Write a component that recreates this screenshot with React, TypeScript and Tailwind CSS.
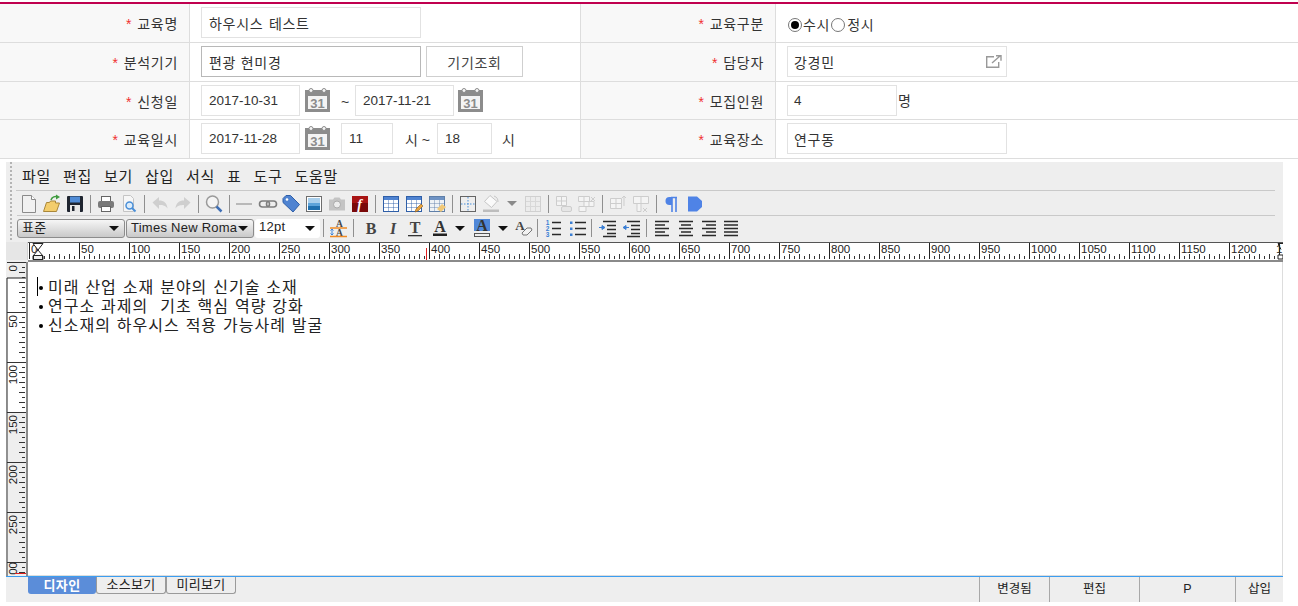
import type { ReactNode } from 'react';

const KR = "font-['Liberation_Sans','Noto_Sans_CJK_KR',sans-serif]";

function Label({ children }: { children: ReactNode }) {
  return (
    <div className="h-full flex items-center justify-end pt-[3px] pr-[11px] bg-[#f8f8f8] border-r border-[#dddddd] text-[14px] tracking-[0.7px] text-[#333]">
      <span className="text-[#f03030] mr-[5px]">*</span>
      {children}
    </div>
  );
}

function Field({ className, children }: { className: string; children?: ReactNode }) {
  return (
    <div className={`h-[31px] shrink-0 flex items-center pt-[3px] pl-[7px] border border-[#e2e2e2] bg-white text-[14px] tracking-[0.7px] text-[#333] ${className}`}>
      {children}
    </div>
  );
}

function Num({ children }: { children: string }) {
  return <span className="text-[13.5px] tracking-normal -mt-[1px]">{children}</span>;
}

function Calendar({ className }: { className: string }) {
  return (
    <svg width="25" height="25" viewBox="0 0 25 25" className={`shrink-0 -mt-[2px] ${className}`}>
      <rect x="0" y="3" width="25" height="22" fill="#8c8c8c" />
      <rect x="3" y="9" width="19" height="13" fill="#f4f4f4" />
      <circle cx="6" cy="3.5" r="2" fill="#f4f4f4" stroke="#8c8c8c" />
      <circle cx="19" cy="3.5" r="2" fill="#f4f4f4" stroke="#8c8c8c" />
      <text x="12.5" y="20.5" textAnchor="middle" fontSize="13" fontWeight="700" fontFamily="Liberation Sans" fill="#8c8c8c">31</text>
    </svg>
  );
}

function Radio({ checked }: { checked?: boolean }) {
  return (
    <span className="w-[14px] h-[14px] shrink-0 rounded-full border border-[#777] bg-white flex items-center justify-center">
      {checked && <span className="w-[8px] h-[8px] rounded-full bg-black" />}
    </span>
  );
}

function FormTable() {
  return (
    <div className={`mt-[2px] border-t-2 border-[#c0004f] ${KR}`}>
      <div className="grid grid-cols-[190px_391px_195px_1fr] grid-rows-[38px] h-[39px] border-b border-[#dddddd] items-center">
        <Label>교육명</Label>
        <div className="h-full flex items-center pb-[1px] pl-[11px] border-r border-[#dddddd]">
          <Field className="w-[220px]"><span className="[word-spacing:1px]">하우시스 테스트</span></Field>
        </div>
        <Label>교육구분</Label>
        <div className="h-full flex items-center pt-[3px] pl-[12px] text-[14px] tracking-[0.7px] text-[#333]">
          <Radio checked /><span className="ml-[1px] mt-[2px]">수시</span>
          <span className="ml-[1px]"><Radio /></span><span className="ml-[2px] mt-[2px]">정시</span>
        </div>
      </div>
      <div className="grid grid-cols-[190px_391px_195px_1fr] grid-rows-[38px] h-[39px] border-b border-[#dddddd] items-center">
        <Label>분석기기</Label>
        <div className="h-full flex items-center pb-[1px] pl-[11px] border-r border-[#dddddd]">
          <Field className="w-[220px] !border-[#b8b8b8]">편광 현미경</Field>
          <div className="ml-[5px] w-[97px] h-[31px] flex items-center justify-center pt-[3px] border border-[#cfcfcf] bg-white text-[14px] tracking-[0.7px] text-[#444]">기기조회</div>
        </div>
        <Label>담당자</Label>
        <div className="h-full flex items-center pb-[1px] pl-[11px]">
          <Field className="w-[220px] !pl-[6px] justify-between pr-[4px]">
            강경민
            <svg width="16" height="13" viewBox="0 0 16 13" fill="none" stroke="#999" strokeWidth="1.4" className="-mt-[3px]">
              <path d="M8 1.7H.7v10.6h12V7" />
              <path d="M6 8l8-7M10 .7h5v5" />
            </svg>
          </Field>
        </div>
      </div>
      <div className="grid grid-cols-[190px_391px_195px_1fr] grid-rows-[37px] h-[38px] border-b border-[#dddddd] items-center">
        <Label>신청일</Label>
        <div className="h-full flex items-center pl-[11px] border-r border-[#dddddd]">
          <Field className="w-[99px]"><Num>2017-10-31</Num></Field>
          <Calendar className="ml-[5px]" />
          <span className="ml-[11px] w-[14px] mt-[3px] text-[14px] text-[#333]">~</span>
          <Field className="w-[99px]"><Num>2017-11-21</Num></Field>
          <Calendar className="ml-[4px]" />
        </div>
        <Label>모집인원</Label>
        <div className="h-full flex items-center pl-[11px] text-[14px] text-[#333]">
          <Field className="w-[110px] !pl-[6px]"><Num>4</Num></Field>
          <span className="ml-[1px] mt-[2px]">명</span>
        </div>
      </div>
      <div className="grid grid-cols-[190px_391px_195px_1fr] grid-rows-[38px] h-[39px] border-b border-[#dddddd] items-center">
        <Label>교육일시</Label>
        <div className="h-full flex items-center pb-[1px] pl-[11px] border-r border-[#dddddd] text-[14px] text-[#333]">
          <Field className="w-[99px]"><Num>2017-11-28</Num></Field>
          <Calendar className="ml-[5px]" />
          <Field className="ml-[11px] w-[52px]"><Num>11</Num></Field>
          <span className="ml-[12px] w-[32px] mt-[3px]">시 ~</span>
          <Field className="w-[55px]"><Num>18</Num></Field>
          <span className="ml-[10px] mt-[3px]">시</span>
        </div>
        <Label>교육장소</Label>
        <div className="h-full flex items-center pb-[1px] pl-[11px]">
          <Field className="w-[220px] !pl-[6px]">연구동</Field>
        </div>
      </div>
    </div>
  );
}

function Ico({ children, className = 'w-[23px]' }: { children: ReactNode; className?: string }) {
  return (
    <div className={`shrink-0 h-full flex items-center justify-center ${className}`}>
      <svg width="20" height="20" viewBox="0 0 20 20">{children}</svg>
    </div>
  );
}

function Sep({ className = 'w-[8px]' }: { className?: string }) {
  return (
    <div className={`shrink-0 h-full flex items-center justify-center ${className}`}>
      <div className="w-[1px] h-[18px] bg-[#8f8f8f]" />
    </div>
  );
}

function Drop({ color = '#111' }: { color?: string }) {
  return (
    <svg width="10" height="5" viewBox="0 0 10 5" className="shrink-0"><path d="M0 0h10L5 5z" fill={color} /></svg>
  );
}

function GridTable({ stroke, head, cell = '#fff' }: { stroke: string; head: string; cell?: string }) {
  return (
    <>
      <rect x="2.5" y="2.5" width="15" height="15" fill={cell} stroke={stroke} />
      <rect x="3" y="3" width="14" height="3" fill={head} />
      <path d="M7.5 6v11M12.5 6v11M3 9.5h14M3 13.5h14" stroke={stroke} strokeOpacity="0.45" fill="none" />
    </>
  );
}

function ToolbarOne() {
  return (
    <div className="h-[23px] ml-[5px] pt-[1px] flex items-center border-b border-[#c9c9c9] box-content">
      <Ico>
        <path d="M3.5 1.5h9l4 4v13h-13z" fill="#f1f1f1" stroke="#8a8a8a" />
        <path d="M12.5 1.5v4h4" fill="#fff" stroke="#8a8a8a" />
      </Ico>
      <Ico>
        <path d="M1.5 17.5l3-9h3l1-1.5h5v2h4l-3 8.500z" fill="#f3cd6c" stroke="#a9873a" />
        <path d="M9 6c1-3 4-4 7-3" stroke="#3f9b3f" strokeWidth="1.600" fill="none" />
        <path d="M14 0.500l4 2.500-4 2.500z" fill="#3f9b3f" />
      </Ico>
      <Ico>
        <rect x="2" y="2" width="16" height="16" rx="1" fill="#1f2530" />
        <rect x="5" y="2.500" width="10" height="6" fill="#4f8bd6" />
        <rect x="5" y="11" width="10" height="7" fill="#e8e8e8" />
        <rect x="7" y="12" width="2.500" height="5" fill="#1f2530" />
      </Ico>
      <Sep />
      <Ico>
        <rect x="5.500" y="2.500" width="9" height="5" fill="#fff" stroke="#666" />
        <rect x="2" y="7" width="16" height="7" rx="2" fill="#7a7a7a" />
        <rect x="5.500" y="12.500" width="9" height="5" fill="#fff" stroke="#666" />
      </Ico>
      <Ico>
        <path d="M4.500 1.500h7l3 3v13h-10z" fill="#f6f6f6" stroke="#c4c4c4" />
        <circle cx="10.500" cy="11.500" r="3.500" fill="#dcecfa" stroke="#4a8fd8" strokeWidth="1.500" />
        <path d="M13 14l3.500 3.500" stroke="#4a8fd8" strokeWidth="2" />
      </Ico>
      <Sep />
      <Ico>
        <path d="M2.500 8.500L9 3v3.500c5 0 8 2.500 8.500 8-2-3-4.500-3.500-8.500-3.500V15z" fill="#cfcfcf" />
      </Ico>
      <Ico>
        <path d="M17.500 8.500L11 3v3.500c-5 0-8 2.500-8.500 8 2-3 4.500-3.500 8.500-3.500V15z" fill="#cfcfcf" />
      </Ico>
      <Sep />
      <Ico>
        <circle cx="8.500" cy="8" r="6" fill="#f4f4f4" stroke="#9a9a9a" strokeWidth="1.500" />
        <path d="M12.500 12.500l5 5" stroke="#3f6fb5" strokeWidth="2.500" />
      </Ico>
      <Sep />
      <Ico><rect x="1" y="9" width="16" height="2" fill="#b9b9b9" /></Ico>
      <Ico>
        <rect x="1.500" y="7" width="10" height="6" rx="3" fill="none" stroke="#7d7d7d" strokeWidth="1.600" />
        <rect x="8.500" y="7" width="10" height="6" rx="3" fill="none" stroke="#7d7d7d" strokeWidth="1.600" />
      </Ico>
      <Ico>
        <path d="M2 4.500L5 1.500h4.500l9 9-6.500 7.500-10-9.500z" fill="#4f83d1" stroke="#2f5fa8" />
        <circle cx="6" cy="5.500" r="1.300" fill="#fff" />
      </Ico>
      <Ico>
        <rect x="2.500" y="2.500" width="15" height="15" fill="#fff" stroke="#6d6d6d" />
        <rect x="4" y="4" width="12" height="5" fill="#a9cfec" />
        <rect x="4" y="9" width="12" height="3" fill="#5da3d9" />
        <rect x="4" y="12" width="12" height="4" fill="#1f6fae" />
      </Ico>
      <Ico>
        <path d="M2 5.500h4l1.500-2h5l1.500 2h4v11H2z" fill="#c4c4c4" />
        <circle cx="10" cy="10.500" r="3.500" fill="#ececec" stroke="#aaa" />
      </Ico>
      <Ico>
        <rect x="2" y="2" width="16" height="16" fill="#7a0a0a" />
        <rect x="2" y="2" width="16" height="7" fill="#a81414" />
        <text x="9.500" y="15" textAnchor="middle" fontSize="14" fontWeight="700" fontStyle="italic" fontFamily="Liberation Serif" fill="#fff">f</text>
      </Ico>
      <Sep />
      <Ico><GridTable stroke="#2f5fa8" head="#4f83d1" /></Ico>
      <Ico>
        <GridTable stroke="#2f5fa8" head="#4f83d1" />
        <path d="M11 18l1-3 5-5 2 2-5 5z" fill="#e8a33c" stroke="#8a5a20" strokeWidth="0.600" />
      </Ico>
      <Ico>
        <GridTable stroke="#5f7fa8" head="#6f93c4" cell="#eef2f6" />
        <path d="M10 15l5-5 4 3-5 5z" fill="#f0c878" />
      </Ico>
      <Sep />
      <Ico>
        <rect x="2.500" y="2.500" width="15" height="15" fill="none" stroke="#666" />
        <path d="M10 3v14M3 10h14" stroke="#4a8fd8" strokeDasharray="1.500 1.500" />
      </Ico>
      <Ico>
        <path d="M9 1.500l7 6-5.500 6-7-6z" fill="#fafafa" stroke="#c6c6c6" />
        <path d="M13 2c3 1 4 3 4 6" stroke="#c6c6c6" fill="none" />
        <rect x="2" y="15.500" width="16" height="2.500" fill="#bdbdbd" />
      </Ico>
      <div className="w-[19px] h-full shrink-0 flex items-center justify-center"><Drop color="#8a8a8a" /></div>
      <Ico>
        <rect x="2.500" y="2.500" width="15" height="15" fill="#ececec" stroke="#d0d0d0" />
        <path d="M7.500 3v14M12.500 3v14M3 7.500h14M3 12.500h14" stroke="#d8d8d8" />
      </Ico>
      <Sep />
      <Ico>
        <path d="M2.500 2.500h10v9h-10zM7.500 2.500v9M2.500 7h10" fill="#f4f4f4" stroke="#cdcdcd" />
        <rect x="7.500" y="12.500" width="10" height="5" rx="1.500" fill="#e6e6e6" stroke="#cdcdcd" />
      </Ico>
      <Ico>
        <path d="M1.500 2.500h11v5h-11zM7 2.500v5M7 7.500h10v5H7zM12 7.500v5M2 12.500h7v5H2z" fill="#f4f4f4" stroke="#cdcdcd" />
        <path d="M14 3l4 4M18 3l-4 4" stroke="#cdcdcd" />
      </Ico>
      <Sep />
      <Ico>
        <path d="M2.500 4.500h11v10h-11zM8 4.500v10M2.500 9.500h11" fill="#f4f4f4" stroke="#cdcdcd" />
        <path d="M16 12V2M14 4l2-2 2 2" fill="none" stroke="#cdcdcd" />
      </Ico>
      <Ico>
        <path d="M2.500 2.500h15v7h-15zM10 2.500v15h-4v-8M10 9.500h4" fill="#f4f4f4" stroke="#cdcdcd" />
        <path d="M12 14l4 4M16 14l-4 4" stroke="#cdcdcd" />
      </Ico>
      <Sep />
      <Ico>
        <path d="M10 3H7.500a4 4 0 0 0 0 8H10z" fill="#4f83e6" />
        <path d="M10 3v15M14 3v15" stroke="#4f83e6" strokeWidth="1.600" />
        <path d="M9 3.500h6" stroke="#4f83e6" strokeWidth="1.500" />
      </Ico>
      <Ico>
        <path d="M3 2.500h9l5 4.500v6l-5 4.500H3z" fill="#4f83e6" />
      </Ico>
    </div>
  );
}

function Lines({ d }: { d: string }) {
  return <path d={d} stroke="#2a2a2a" strokeWidth="1.300" fill="none" />;
}

function Select({ className, children, white }: { className: string; children: ReactNode; white?: boolean }) {
  return (
    <div className={`h-[19px] shrink-0 flex items-center justify-between pl-[4px] pr-[5px] rounded-[3px] ${white ? 'bg-white' : 'bg-gradient-to-b from-[#f6f6f6] to-[#c9c9c9] border border-[#8c8c8c]'} ${className}`}>
      <span className={`text-[13px] tracking-[0.25px] text-[#222] whitespace-nowrap ${white ? '-mt-[2px]' : ''}`}>{children}</span>
      <Drop />
    </div>
  );
}

function ToolbarTwo() {
  const serif = 'Liberation Serif';
  return (
    <div className="h-[24px] flex items-center">
      <Select className="ml-[5px] w-[108px]">표준</Select>
      <Select className="ml-[1px] w-[128px]">Times New Roma</Select>
      <Select className="ml-[1px] w-[65px]" white>12pt</Select>
      <Sep className="w-[6px]" />
      <Ico className="w-[24px]">
        <text x="11.500" y="8.500" textAnchor="middle" fontSize="9.500" fontWeight="700" fontFamily={serif} fill="#444">A</text>
        <text x="11.500" y="18" textAnchor="middle" fontSize="9.500" fontWeight="700" fontFamily={serif} fill="#444">A</text>
        <path d="M2 10h17M2 18.500h17" stroke="#f08a24" strokeWidth="1.300" />
        <path d="M4 11v6M2.500 12.500L4 11l1.500 1.500M2.500 15.500L4 17l1.500-1.500" stroke="#3b82d8" fill="none" />
      </Ico>
      <Sep className="w-[6px]" />
      <Ico className="ml-[4px] w-[22px]">
        <text x="10" y="16" textAnchor="middle" fontSize="16" fontWeight="700" fontFamily={serif} fill="#444">B</text>
      </Ico>
      <Ico className="w-[22px]">
        <text x="10" y="16" textAnchor="middle" fontSize="16" fontWeight="700" fontStyle="italic" fontFamily={serif} fill="#444">I</text>
      </Ico>
      <Ico className="w-[22px]">
        <text x="10" y="15" textAnchor="middle" fontSize="16" fontWeight="700" fontFamily={serif} fill="#444">T</text>
        <rect x="3" y="17" width="14" height="1.300" fill="#333" />
      </Ico>
      <Ico className="ml-[3px] w-[22px]">
        <text x="10" y="14" textAnchor="middle" fontSize="16" fontWeight="700" fontFamily={serif} fill="#333">A</text>
        <rect x="3" y="15.500" width="14" height="2.500" fill="#222" />
      </Ico>
      <div className="w-[18px] h-full shrink-0 flex items-center justify-center"><Drop /></div>
      <Ico className="ml-[2px] w-[22px]">
        <rect x="2" y="1" width="16" height="12" fill="#4f87d8" />
        <text x="10" y="13" textAnchor="middle" fontSize="16" fontWeight="700" fontFamily={serif} fill="#333">A</text>
        <rect x="2.500" y="15.500" width="15" height="3" fill="#eee" stroke="#555" />
      </Ico>
      <div className="ml-[1px] w-[18px] h-full shrink-0 flex items-center justify-center"><Drop /></div>
      <Ico className="w-[22px]">
        <text x="7" y="12" textAnchor="middle" fontSize="13" fontWeight="700" fontFamily={serif} fill="#444">A</text>
        <path d="M9 15l5-5h4l1 2-5 5h-4z" fill="#f2f2f2" stroke="#777" />
      </Ico>
      <Sep className="w-[6px]" />
      <Ico className="ml-[2px] w-[22px]">
        <text x="4.500" y="7" textAnchor="middle" fontSize="6.500" fontWeight="700" fontFamily="Liberation Sans" fill="#3b7fd4">1</text>
        <text x="4.500" y="13" textAnchor="middle" fontSize="6.500" fontWeight="700" fontFamily="Liberation Sans" fill="#3b7fd4">2</text>
        <text x="4.500" y="19" textAnchor="middle" fontSize="6.500" fontWeight="700" fontFamily="Liberation Sans" fill="#3b7fd4">3</text>
        <Lines d="M9 4.500h9M9 10.500h9M9 16.500h9" />
      </Ico>
      <Ico className="ml-[4px] w-[20px]">
        <rect x="2" y="3.500" width="2.500" height="2.500" fill="#3b7fd4" />
        <rect x="2" y="9.500" width="2.500" height="2.500" fill="#3b7fd4" />
        <rect x="2" y="15.500" width="2.500" height="2.500" fill="#3b7fd4" />
        <Lines d="M7 4.500h11M7 10.500h11M7 16.500h11" />
      </Ico>
      <Sep className="w-[6px]" />
      <Ico className="ml-[3px] w-[22px]">
        <Lines d="M5 3.500h13M9 7.500h9M9 11.500h9M9 15.500h9M5 18.500h13" />
        <path d="M1 9.500h5M4 7.500l3 2-3 2z" fill="#3b7fd4" stroke="#3b7fd4" />
      </Ico>
      <Ico className="ml-[2px] w-[22px]">
        <Lines d="M5 3.500h13M9 7.500h9M9 11.500h9M9 15.500h9M5 18.500h13" />
        <path d="M7 9.500H2M4 7.500l-3 2 3 2z" fill="#3b7fd4" stroke="#3b7fd4" />
      </Ico>
      <Sep className="w-[6px]" />
      <Ico className="ml-[2px] w-[22px]"><Lines d="M3 3.500h14M3 7h10M3 10.500h14M3 14h10M3 17.500h14" /></Ico>
      <Ico className="ml-[2px] w-[22px]"><Lines d="M3 3.500h14M5 7h10M3 10.500h14M5 14h10M3 17.500h14" /></Ico>
      <Ico className="ml-[1px] w-[22px]"><Lines d="M3 3.500h14M7 7h10M3 10.500h14M7 14h10M3 17.500h14" /></Ico>
      <Ico className="w-[22px]"><Lines d="M3 3.500h14M3 7h14M3 10.500h14M3 14h14M3 17.500h14" /></Ico>
    </div>
  );
}

function HRuler() {
  const majors = Array.from({ length: 26 }, (_, i) => i);
  const minors = Array.from({ length: 251 }, (_, i) => i);
  return (
    <svg width="1255" height="18" viewBox="0 0 1255 18" className="block">
      <rect width="1255" height="18" fill="#fff" />
      <path d="M0 .5h1255" stroke="#555" />
      {minors.map(i => (
        <rect key={i} x={1 + i * 5} y={i % 2 ? 14 : 12} width="1" height={i % 2 ? 3 : 5} fill="#333" />
      ))}
      {majors.map(i => (
        <g key={i}>
          <rect x={1 + i * 50} y="1" width="1" height="16" fill="#222" />
          <text x={i === 25 ? 1248 : 3 + i * 50} y="11" fontSize="11.500" fontFamily="Liberation Sans" fill="#222">{i === 25 ? '1' : i * 50}</text>
        </g>
      ))}
      <path d="M5 1.500h10L10 8l5 6v3.500H5V14l5-6z" fill="#fff" stroke="#222" />
      <rect x="5.500" y="13.500" width="9" height="4" fill="#eee" stroke="#222" />
      <rect x="398" y="6" width="1" height="12" fill="#e02020" />
      <path d="M1250 1.500h5M1250 1.500l3 6M1250 13h5v4h-5z" fill="#fff" stroke="#222" />
    </svg>
  );
}

function VRuler() {
  const majors = Array.from({ length: 7 }, (_, i) => i);
  const minors = Array.from({ length: 63 }, (_, i) => i);
  return (
    <svg width="22" height="314" viewBox="0 0 22 314" className="block shrink-0">
      <rect width="22" height="314" fill="#eeeeee" />
      <rect x="1" y="16" width="19" height="135" fill="#fff" />
      <path d="M1 314V16M1 16h19" stroke="#222" fill="none" />
      <path d="M1 151v163" stroke="#999" />
      {minors.map(i => (
        <rect key={i} x={i % 2 ? 16 : 13} y={i * 5} width={i % 2 ? 3 : 6} height="1" fill="#333" />
      ))}
      {majors.map(i => (
        <g key={i}>
          <rect x="1" y={i * 50} width="19" height="1" fill="#333" />
          <text transform={`translate(11 ${i === 6 ? 300 : i * 50 + 3}) rotate(-90)`} textAnchor="end" fontSize="11.500" fontFamily="Liberation Sans" fill="#222">{i === 6 ? '00' : i * 50}</text>
        </g>
      ))}
      <rect x="9" y="311" width="11" height="1" fill="#e02020" />
      <rect x="20" width="2" height="314" fill="#8a8a8a" />
    </svg>
  );
}

function BodyLine({ children, caret }: { children: string; caret?: boolean }) {
  return (
    <div className="h-[19px] flex items-center relative">
      {caret && <span className="absolute left-[9px] top-[-1px] w-[1px] h-[19px] bg-black" />}
      <span className="ml-[11px] w-[4px] h-[4px] rounded-full bg-black shrink-0" />
      <span className="ml-[5px] text-[16px] tracking-[1px] text-[#222] whitespace-pre [word-spacing:0.5px]">{children}</span>
    </div>
  );
}

function Editor() {
  return (
    <div className={`mt-[3px] ml-[6px] w-[1277px] h-[440px] flex flex-col bg-[#eeeeee] ${KR}`}>
      <div className="flex h-[78px] shrink-0">
        <div className="ml-[4px] w-[2px] h-full bg-[repeating-linear-gradient(to_bottom,#b4b4b4_0,#b4b4b4_2px,transparent_2px,transparent_4px)]" />
        <div className="flex-1 min-w-0 mr-[8px]">
          <div className="h-[29px] ml-[4px] pt-[3px] border-b border-[#c9c9c9] flex items-center gap-[12px] pl-[6px] text-[15px] tracking-[0.7px] text-[#222]">
            <span>파일</span><span>편집</span><span>보기</span><span>삽입</span><span>서식</span><span>표</span><span>도구</span><span>도움말</span>
          </div>
          <ToolbarOne />
          <ToolbarTwo />
        </div>
      </div>
      <div className="mt-[2px] flex h-[18px] shrink-0">
        <div className="w-[22px] h-full shrink-0 bg-[#e6e6e6] border-r border-[#d0d0d0]" />
        <HRuler />
      </div>
      <div className="h-[2px] shrink-0 bg-[#8a8a8a] ml-[22px]" />
      <div className="flex flex-1 min-h-0">
        <VRuler />
        <div className="flex-1 bg-white border-r border-b border-[#dddddd] pt-[16px]">
          <BodyLine caret>미래 산업 소재 분야의 신기술 소재</BodyLine>
          <BodyLine>{'연구소 과제의  기초 핵심 역량 강화'}</BodyLine>
          <BodyLine>신소재의 하우시스 적용 가능사례 발굴</BodyLine>
        </div>
      </div>
      <div className="h-[26px] shrink-0 flex border-t border-[#3b9df0]">
        <div className="ml-[22px] flex items-start text-[13px] tracking-[0.3px] h-[17px]">
          <div className="w-[68px] h-full flex items-center justify-center rounded-b-[3px] bg-[#5b8dd9] text-white font-bold">디자인</div>
          <div className="w-[70px] h-full flex items-center justify-center rounded-b-[3px] border border-t-0 border-[#9a9a9a] text-[#222]">소스보기</div>
          <div className="w-[70px] h-full flex items-center justify-center rounded-b-[3px] border border-t-0 border-[#9a9a9a] text-[#222]">미리보기</div>
        </div>
        <div className="ml-auto flex h-full text-[12.5px] text-[#222]">
          <div className="w-[70px] flex items-center justify-center border-l border-[#a8a8a8]">변경됨</div>
          <div className="w-[90px] flex items-center justify-center border-l border-[#a8a8a8]">편집</div>
          <div className="w-[96px] flex items-center justify-center border-l border-[#a8a8a8]">P</div>
          <div className="w-[48px] flex items-center justify-center border-l border-[#a8a8a8]">삽입</div>
        </div>
      </div>
    </div>
  );
}

export default function App() {
  return (
    <div className="w-[1298px] h-[606px] bg-white overflow-hidden">
      <FormTable />
      <Editor />
    </div>
  );
}
